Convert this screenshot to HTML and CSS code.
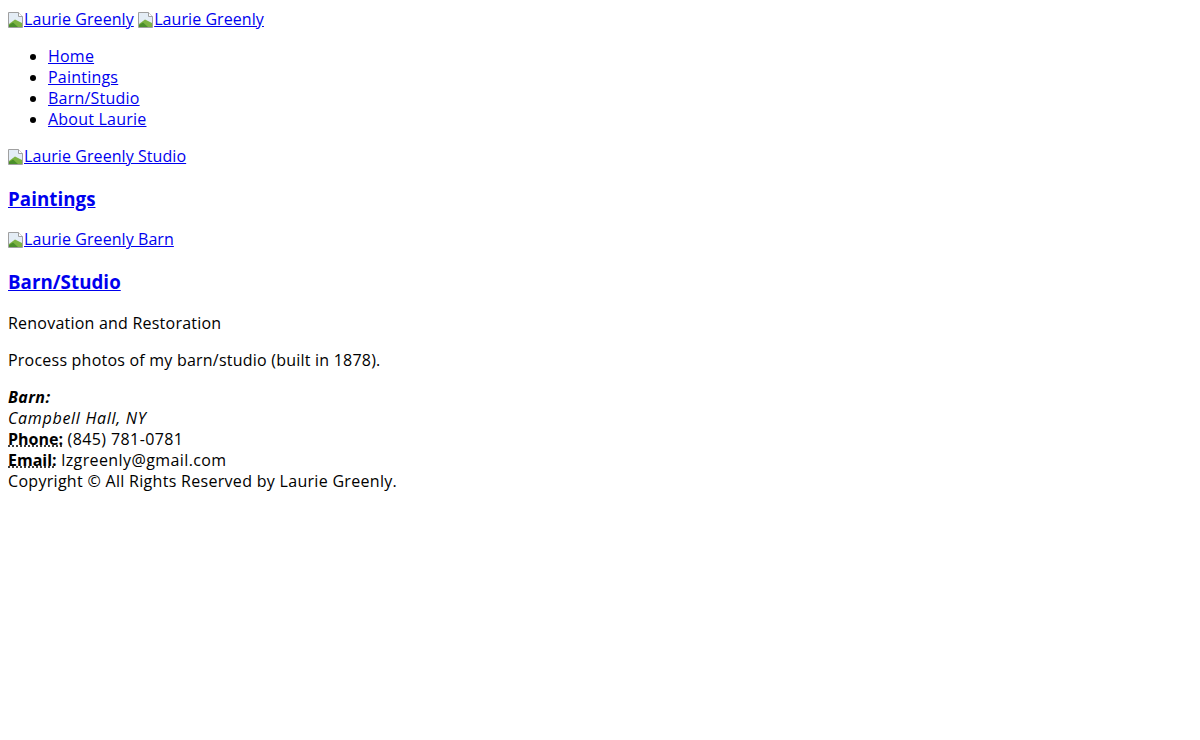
FILE: index.html
```html
<!DOCTYPE html>
<html lang="en">
<head>
<meta charset="utf-8">
<title>Laurie Greenly</title>
<link rel="stylesheet" href="styles.css">
</head>
<body>
<div class="header">
  <a href="#" class="imglink"><svg class="broken" width="16" height="16" viewBox="0 0 16 16"><path d="M0.5 0.5h10l4 4v11h-14z" fill="#e4edf6" stroke="#a0a0a0"/><path d="M10.5 0.5v4h4" fill="#fff" stroke="#a0a0a0"/><path d="M1 15 L1 12 L7 7.5 L12 10 L14 11 L14 15 Z" fill="#7cb342"/><path d="M1 15 L1 13 L5 10.5 L10 15 Z" fill="#4a8f2a"/></svg>Laurie Greenly</a>
  <a href="#" class="imglink"><svg class="broken" width="16" height="16" viewBox="0 0 16 16"><path d="M0.5 0.5h10l4 4v11h-14z" fill="#e4edf6" stroke="#a0a0a0"/><path d="M10.5 0.5v4h4" fill="#fff" stroke="#a0a0a0"/><path d="M1 15 L1 12 L7 7.5 L12 10 L14 11 L14 15 Z" fill="#7cb342"/><path d="M1 15 L1 13 L5 10.5 L10 15 Z" fill="#4a8f2a"/></svg>Laurie Greenly</a>
</div>
<ul class="nav">
  <li><a href="#">Home</a></li>
  <li><a href="#">Paintings</a></li>
  <li><a href="#">Barn/Studio</a></li>
  <li><a href="#">About Laurie</a></li>
</ul>
<p class="para"><a href="#" class="imglink"><svg class="broken" width="16" height="16" viewBox="0 0 16 16"><path d="M0.5 0.5h10l4 4v11h-14z" fill="#e4edf6" stroke="#a0a0a0"/><path d="M10.5 0.5v4h4" fill="#fff" stroke="#a0a0a0"/><path d="M1 15 L1 12 L7 7.5 L12 10 L14 11 L14 15 Z" fill="#7cb342"/><path d="M1 15 L1 13 L5 10.5 L10 15 Z" fill="#4a8f2a"/></svg>Laurie Greenly Studio</a></p>
<h3 class="title"><a href="#">Paintings</a></h3>
<p class="para"><a href="#" class="imglink"><svg class="broken" width="16" height="16" viewBox="0 0 16 16"><path d="M0.5 0.5h10l4 4v11h-14z" fill="#e4edf6" stroke="#a0a0a0"/><path d="M10.5 0.5v4h4" fill="#fff" stroke="#a0a0a0"/><path d="M1 15 L1 12 L7 7.5 L12 10 L14 11 L14 15 Z" fill="#7cb342"/><path d="M1 15 L1 13 L5 10.5 L10 15 Z" fill="#4a8f2a"/></svg>Laurie Greenly Barn</a></p>
<h3 class="title"><a href="#">Barn/Studio</a></h3>
<p class="para">Renovation and Restoration</p>
<p class="para">Process photos of my barn/studio (built in 1878).</p>
<div class="contact">
  <strong class="bi"><em>Barn:</em></strong><br>
  <em class="it">Campbell Hall, NY</em><br>
  <abbr title="Phone" class="abbr"><strong class="b">Phone:</strong></abbr> (845) 781-0781<br>
  <abbr title="Email" class="abbr"><strong class="b">Email:</strong></abbr> lzgreenly@gmail.com
</div>
<div class="copy">Copyright © All Rights Reserved by Laurie Greenly.</div>
</body>
</html>
```
FILE: styles.css
```css
body {
  margin: 8px;
  padding-top: 1px;
  font-family: "Open Sans", "Noto Sans", sans-serif;
  font-size: 16px;
  line-height: 21px;
  letter-spacing: 0.22px;
  color: #000;
  background: #fff;
}
a {
  color: #0000ee;
}
.header {
  line-height: 21px;
}
.imglink {
  letter-spacing: 0.07px;
}
.imglink .broken {
  vertical-align: -3px;
}
.nav {
  margin: 16px 0;
  padding-left: 40px;
}
.para {
  margin: 16px 0;
}
.title {
  font-size: 18.72px;
  line-height: 25px;
  margin: 18.72px 0;
  font-weight: bold;
  letter-spacing: 0.05px;
}
.contact {
  margin-top: 16px;
  letter-spacing: 0.4px;
}
.b {
  letter-spacing: 0;
}
.bi {
  letter-spacing: 0.4px;
}
.it {
  letter-spacing: 0.7px;
}
.copy {
  letter-spacing: 0.3px;
}
.abbr {
  text-decoration: underline dotted;
}
```
